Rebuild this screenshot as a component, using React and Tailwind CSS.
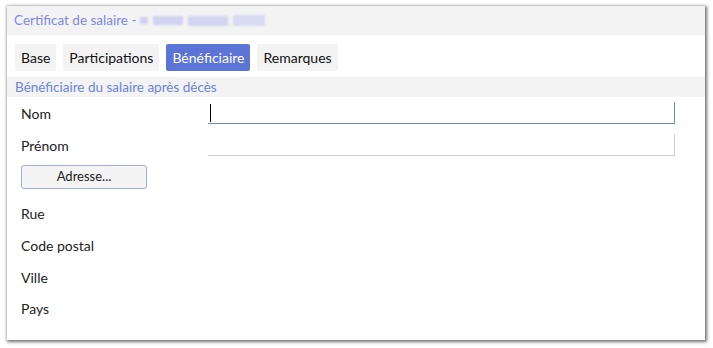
export default function App() {
  const tabs = ['Base', 'Participations', 'Bénéficiaire', 'Remarques'];
  const labels = ['Rue', 'Code postal', 'Ville', 'Pays'];

  return (
    <div className="w-[713px] h-[348px] bg-white pt-[6px] pl-[7px] font-['Lato',sans-serif]">
      <div className="w-[698px] h-[334px] bg-white shadow-[1px_1px_3px_1px_rgba(0,0,0,0.55)] flex flex-col">
        {/* Title */}
        <div className="h-[29px] bg-[#f3f3f3] flex items-center pl-[7px] text-[13.5px] text-[#8088e0]">
          <span>Certificat de salaire -</span>
          <div className="flex items-center gap-[5px] ml-[4px] blur-[1px] opacity-80">
            <div className="w-[8px] h-[7px] bg-[#c7c9ef]" />
            <div className="w-[30px] h-[9px] bg-[#c8caf0]" />
            <div className="w-[40px] h-[10px] bg-[#cbcdf1]" />
            <div className="w-[32px] h-[11px] bg-[#d3d5f3]" />
          </div>
        </div>

        {/* Tabs */}
        <div className="h-[42px] flex items-center gap-[7px] pl-[8px] pt-[2px]">
          {tabs.map((t) => (
            <div
              key={t}
              className={
                t === 'Bénéficiaire'
                  ? 'h-[27px] px-[6px] flex items-center rounded-[2px] bg-[#5b74d6] text-white text-[14px]'
                  : 'h-[27px] px-[6px] flex items-center rounded-[2px] bg-[#f3f3f3] text-[#111] text-[14px]'
              }
            >
              {t}
            </div>
          ))}
        </div>

        {/* Section header */}
        <div className="h-[20px] bg-[#f3f3f3] flex items-center pl-[8px] text-[13.5px] text-[#6b84de]">
          Bénéficiaire du salaire après décès
        </div>

        {/* Form */}
        <div className="flex flex-col pl-[14px] text-[14px] text-[#222]">
          <div className="h-[27px] flex items-end">
            <span className="w-[187px] leading-none pb-[3px]">Nom</span>
            <div className="w-[467px] h-[22px] border-b border-r border-[#6b84de] relative">
              <div className="absolute left-[2px] top-[2px] w-px h-[18px] bg-black" />
            </div>
          </div>
          <div className="h-[32px] flex items-end">
            <span className="w-[187px] leading-none pb-[3px]">Prénom</span>
            <div className="w-[467px] h-[22px] border-b border-r border-[#cfcfcf]" />
          </div>
          <div className="pt-[9px] pb-[9px]">
            <button className="w-[126px] h-[24px] rounded-[3px] border border-[#9eabe5] bg-[#f4f4f4] text-[13px] text-[#222]">
              Adresse...
            </button>
          </div>
          {labels.map((l) => (
            <div key={l} className="h-[31.7px] flex items-center">
              {l}
            </div>
          ))}
        </div>
      </div>
    </div>
  );
}
